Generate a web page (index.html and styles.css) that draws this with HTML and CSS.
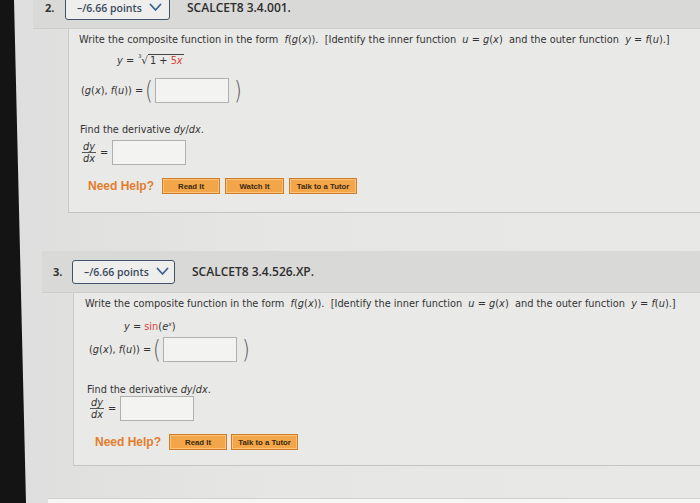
FILE: index.html
```html
<!DOCTYPE html>
<html>
<head>
<meta charset="utf-8">
<link rel="stylesheet" href="styles.css">
</head>
<body>
<div class="screen">
  <div class="page">
    <section class="q q2">
      <div class="qhead">
        <span class="num">2.</span>
        <div class="points">–/6.66 points
          <svg class="chev" width="13" height="9" viewBox="0 0 13 9"><path d="M1.5 1.5 L6.5 7 L11.5 1.5" fill="none" stroke="#3d6190" stroke-width="1.8" stroke-linecap="round" stroke-linejoin="round"/></svg>
        </div>
        <span class="code">SCALCET8 3.4.001.</span>
      </div>
      <div class="qbody">
        <p class="line prompt">Write the composite function in the form&nbsp; <i>f</i>(<i>g</i>(<i>x</i>)).&nbsp; [Identify the inner function&nbsp; <i>u</i> = <i>g</i>(<i>x</i>)&nbsp; and the outer function&nbsp; <i>y</i> = <i>f</i>(<i>u</i>).]</p>
        <p class="line eq"><i>y</i> = <span class="idx">3</span><span class="rsign">√</span><span class="rad">1 + <span class="red">5<i>x</i></span></span></p>
        <div class="ansrow">
          <span class="lbl">(<i>g</i>(<i>x</i>), <i>f</i>(<i>u</i>)) =</span>
          <span class="paren">(</span><span class="box"></span><span class="paren">)</span>
        </div>
        <p class="line find">Find the derivative <i>dy</i>/<i>dx</i>.</p>
        <div class="derrow">
          <span class="frac"><span class="top"><i>dy</i></span><span class="bot"><i>dx</i></span></span>
          <span class="eqs">=</span>
          <span class="box"></span>
        </div>
        <div class="help">
          <span class="need">Need Help?</span>
          <span class="btn b-read">Read It</span>
          <span class="btn b-watch">Watch It</span>
          <span class="btn b-tutor">Talk to a Tutor</span>
        </div>
      </div>
    </section>

    <section class="q q3">
      <div class="qhead">
        <span class="num">3.</span>
        <div class="points">–/6.66 points
          <svg class="chev" width="13" height="9" viewBox="0 0 13 9"><path d="M1.5 1.5 L6.5 7 L11.5 1.5" fill="none" stroke="#3d6190" stroke-width="1.8" stroke-linecap="round" stroke-linejoin="round"/></svg>
        </div>
        <span class="code">SCALCET8 3.4.526.XP.</span>
      </div>
      <div class="qbody">
        <p class="line prompt">Write the composite function in the form&nbsp; <i>f</i>(<i>g</i>(<i>x</i>)).&nbsp; [Identify the inner function&nbsp; <i>u</i> = <i>g</i>(<i>x</i>)&nbsp; and the outer function&nbsp; <i>y</i> = <i>f</i>(<i>u</i>).]</p>
        <p class="line eq"><i>y</i> = <span class="red">sin</span>(<i>e</i><sup class="exp"><i>x</i></sup>)</p>
        <div class="ansrow">
          <span class="lbl">(<i>g</i>(<i>x</i>), <i>f</i>(<i>u</i>)) =</span>
          <span class="paren">(</span><span class="box"></span><span class="paren">)</span>
        </div>
        <p class="line find">Find the derivative <i>dy</i>/<i>dx</i>.</p>
        <div class="derrow">
          <span class="frac"><span class="top"><i>dy</i></span><span class="bot"><i>dx</i></span></span>
          <span class="eqs">=</span>
          <span class="box"></span>
        </div>
        <div class="help">
          <span class="need">Need Help?</span>
          <span class="btn b-read">Read It</span>
          <span class="btn b-tutor">Talk to a Tutor</span>
        </div>
      </div>
    </section>
    <div class="nextq"></div>
  </div>
  <div class="bezel"></div>
</div>
</body>
</html>
```

FILE: styles.css
```css
* { box-sizing: border-box; }
html, body { margin: 0; padding: 0; }
body {
  width: 700px;
  height: 503px;
  overflow: hidden;
  background: #e4e4e2;
  font-family: "DejaVu Sans", Verdana, sans-serif;
  color: #333;
}
.screen {
  position: relative;
  width: 700px;
  height: 503px;
  overflow: hidden;
  background: linear-gradient(90deg, #dedede 0%, #e6e6e4 40%, #e8e8e6 100%);
}
.bezel {
  position: absolute;
  left: 0; top: 0;
  width: 27px; height: 503px;
  background: #141414;
  clip-path: polygon(0 0, 14px 0, 26px 100%, 0 100%);
}
.page {
  display: flex;
  flex-direction: column;
}
.q { display: flex; flex-direction: column; }
.qhead {
  height: 42px;
  display: flex;
  align-items: center;
  background: #d9d9d7;
  border-bottom: 1px solid #cdcdcb;
}
.num {
  font-family: "Open Sans", sans-serif;
  font-weight: 700;
  font-size: 11px;
  color: #333;
  width: 20px;
}
.points {
  height: 24px;
  border: 1.5px solid #415367;
  border-radius: 3px;
  background: #eeeeed;
  display: flex;
  align-items: center;
  padding-left: 11px;
  gap: 7px;
  font-family: "Open Sans", sans-serif;
  font-weight: 600;
  font-size: 10.5px;
  color: #3b4a5c;
}
.code {
  font-family: "Open Sans", sans-serif;
  font-weight: 600;
  font-size: 12px;
  color: #2d2d2d;
  margin-left: 17px;
}
.qbody {
  display: flex;
  flex-direction: column;
  align-items: flex-start;
  background: #e9e9e7;
  border-left: 1px solid #cbcbc9;
  border-bottom: 1px solid #c4c4c2;
}
.line {
  margin: 0;
  font-size: 9.8px;
  line-height: 14px;
  white-space: nowrap;
}
.find { font-size: 9.7px; }
i { font-style: italic; }
.red { color: #d8453a; }
.eq { font-size: 9.8px; height: 14px; }
.idx {
  display: inline-block;
  font-size: 5px;
  line-height: 5px;
  vertical-align: 6px;
  width: 3px;
  margin-left: 1px;
}
.rsign { font-size: 10.5px; }
.rad { border-top: 1px solid #444; padding: 0 1px 0 2px; }
.exp { font-size: 6px; vertical-align: 4px; }
.ansrow {
  display: flex;
  align-items: center;
  height: 25px;
  font-size: 9.8px;
  white-space: nowrap;
}
.paren {
  font-family: "DejaVu Sans", sans-serif;
  font-weight: 200;
  font-size: 25px;
  line-height: 25px;
  color: #555;
  transform: scaleX(0.8);
}
.lbl { margin-right: 1px; }
.box {
  display: block;
  width: 74px;
  height: 25px;
  background: #f3f3f2;
  border: 1px solid #b0b0ae;
}
.ansrow .box { margin: 0 4px 0 1px; }
.derrow {
  display: flex;
  align-items: center;
  font-size: 9.8px;
}
.frac {
  display: inline-flex;
  flex-direction: column;
  align-items: center;
  line-height: 11px;
}
.frac .top { border-bottom: 1px solid #555; padding: 0 1px; }
.eqs { margin: 0 4px 0 4px; }
.help {
  display: flex;
  align-items: center;
  gap: 5px;
}
.need {
  font-family: "Liberation Sans", Arial, sans-serif;
  font-weight: 700;
  font-size: 12px;
  color: #e27d2e;
  margin-right: 3px;
}
.btn {
  display: flex;
  align-items: center;
  justify-content: center;
  height: 16px;
  background: #f2a649;
  border: 1px solid #cf7b2a;
  box-shadow: inset 0 0 0 1px #f9c37a;
  font-family: "Liberation Sans", Arial, sans-serif;
  font-weight: 700;
  font-size: 7.8px;
  color: #3b2a12;
}
.b-read { width: 58px; }
.b-watch { width: 59px; }
.b-tutor { width: 68px; }

/* Question 2 (top cut off) */
.q2 { margin-left: 33px; margin-top: -13px; }
.q2 .qhead { padding-left: 12px; }
.q2 .points { width: 105px; }
.q2 .qbody { margin-left: 35px; height: 184px; padding-left: 10px; }
.q2 .prompt { margin-top: 4px; }
.q2 .eq { margin-top: 6px; margin-left: 38px; }
.q2 .ansrow { margin-top: 11px; margin-left: 2px; }
.q2 .find { margin-top: 20px; margin-left: 1px; }
.q2 .derrow { margin-top: 3px; margin-left: 3px; }
.q2 .help { margin-top: 13px; margin-left: 9px; }

/* Question 3 */
.q3 { margin-left: 42px; margin-top: 38px; }
.q3 .qhead { padding-left: 11px; }
.q3 .num { width: 19px; }
.q3 .points { width: 103px; }
.q3 .qbody { margin-left: 31px; height: 173px; padding-left: 11px; }
.q3 .prompt { margin-top: 4px; }
.q3 .eq { margin-top: 6px; margin-left: 39px; }
.q3 .ansrow { margin-top: 6px; margin-left: 4px; }
.q3 .find { margin-top: 21px; margin-left: 2px; }
.q3 .derrow { margin-top: -1px; margin-left: 5px; }
.q3 .help { margin-top: 13px; margin-left: 10px; }
.q3 .b-tutor { width: 67px; margin-left: -1px; }

.nextq {
  margin-left: 48px;
  margin-top: 32px;
  height: 6px;
  background: #f6f6f5;
  border-top: 1px solid #d0d0ce;
}
```
